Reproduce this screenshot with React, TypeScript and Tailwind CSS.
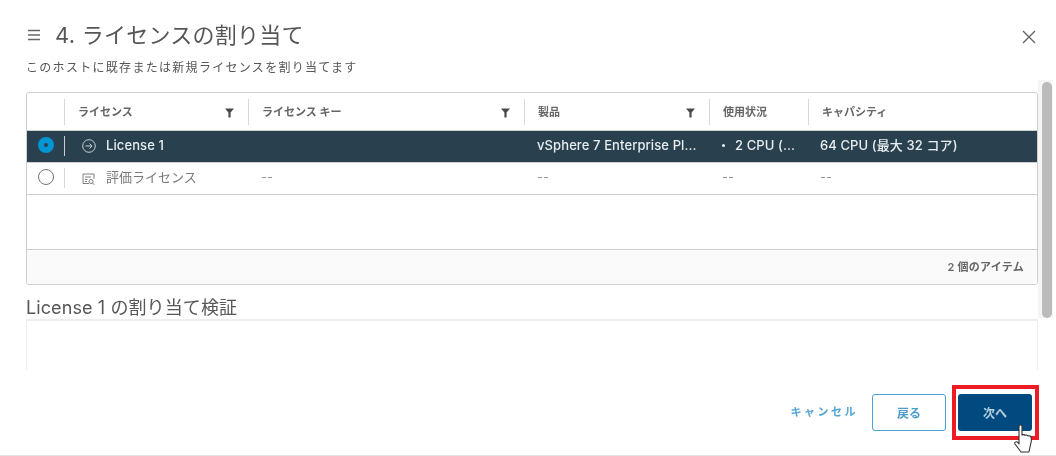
import React from "react";

const FONT = "font-['Inter','Noto_Sans_CJK_JP',sans-serif]";

function Filter() {
  return (
    <svg width="9" height="10" viewBox="0 0 9 10" className="shrink-0 mt-[3px]">
      <path d="M0 0.5h9L5.6 4.4V9.5H3.4V4.4z" fill="#4a4a4a" />
    </svg>
  );
}

function Head({ w, label, filter, cls = "" }: { w: string; label: string; filter?: boolean; cls?: string }) {
  return (
    <div className={`${w} h-full flex items-center ${cls}`}>
      <div className="w-px h-[26px] bg-[#d8d8d8] shrink-0" />
      <span className="ml-[13px] mt-[2px] text-[11px] font-semibold text-[#666] whitespace-nowrap">{label}</span>
      {filter && (
        <span className="ml-auto mr-[14px]">
          <Filter />
        </span>
      )}
    </div>
  );
}

export default function App() {
  return (
    <div className={`relative w-[1056px] h-[456px] bg-white overflow-hidden flex flex-col blur-[0.35px] ${FONT}`}>
      <div className="h-[80px] shrink-0 pl-[26px] pr-[19px] flex flex-col">
        <div className="h-[52px] pt-[18px] flex items-center">
          <svg width="14" height="12" viewBox="0 0 14 12" className="shrink-0 ml-[1px]" fill="none" stroke="#666" strokeWidth="1.5">
            <path d="M1 1.500h12M1 6h12M1 10.500h12" />
          </svg>
          <h1 className="ml-[14px] text-[22px] font-normal text-[#565656] leading-none tracking-[0.25px] whitespace-nowrap">
            4. ライセンスの割り当て
          </h1>
          <svg width="16" height="16" viewBox="0 0 16 16" className="ml-auto mt-[4px]" fill="none" stroke="#666" strokeWidth="1.4">
            <path d="M2 2l12 12M14 2L2 14" />
          </svg>
        </div>
        <p className="mt-[8px] text-[12px] text-[#565656] leading-[16px] tracking-[1.3px] whitespace-nowrap">
          このホストに既存または新規ライセンスを割り当てます
        </p>
      </div>

      <div className="h-[290px] shrink-0 flex overflow-hidden">
        <div className="w-[1038px] shrink-0 pl-[26px] pt-[12px] flex flex-col">
          <div className="h-[193px] shrink-0 border border-[#cfcfcf] rounded-[3px] flex flex-col overflow-hidden">
            <div className="h-[38px] shrink-0 flex items-center border-b border-[#cfcfcf]">
              <div className="w-[37px] shrink-0" />
              <Head w="w-[184px]" label="ライセンス" filter />
              <Head w="w-[276px]" label="ライセンス キー" filter />
              <Head w="w-[185px]" label="製品" filter />
              <Head w="w-[99px]" label="使用状況" />
              <Head w="flex-1" label="キャパシティ" />
            </div>

            <div className="h-[32px] shrink-0 flex items-center bg-[#29414e] text-[13px] font-medium tracking-[0.1px] text-[#e8edf0] border-b border-[#cfcfcf]">
              <div className="w-[37px] shrink-0 flex items-center pl-[11px] -mt-[3px]">
                <span className="w-4 h-4 rounded-full bg-[#0095d3] flex items-center justify-center">
                  <span className="w-[4px] h-[4px] rounded-full bg-[#29414e]" />
                </span>
              </div>
              <div className="w-[184px] h-full flex items-center">
                <div className="w-px h-[20px] bg-[#c8d0d4] -mt-[2px]" />
                <svg width="14" height="14" viewBox="0 0 14 14" className="ml-[17px] -mt-[1px]" fill="none" stroke="#c5ced3" strokeWidth="1">
                  <circle cx="7" cy="7" r="6.3" />
                  <path d="M3.500 7h6.500M7.500 4.500L10 7l-2.500 2.500" />
                </svg>
                <span className="ml-[10px] -mt-[2px]">License 1</span>
              </div>
              <div className="w-[276px]" />
              <div className="w-[185px] pl-[13px] -mt-[2px] whitespace-nowrap">vSphere 7 Enterprise Pl...</div>
              <div className="w-[99px] pl-[13px] -mt-[2px] flex items-center whitespace-nowrap">
                <span className="w-[3px] h-[3px] bg-[#e8edf0] rounded-full mr-[10px]" />2 CPU (...
              </div>
              <div className="flex-1 pl-[12px] -mt-[2px] whitespace-nowrap">64 CPU (最大 32 コア)</div>
            </div>

            <div className="h-[32px] shrink-0 flex items-center text-[13px] text-[#7a7a7a] border-b border-[#cfcfcf]">
              <div className="w-[37px] shrink-0 flex items-center pl-[11px] -mt-[3px]">
                <span className="w-4 h-4 rounded-full border border-[#737373] bg-white" />
              </div>
              <div className="w-[184px] h-full flex items-center">
                <div className="w-px h-[20px] bg-[#d8d8d8] -mt-[2px]" />
                <svg width="14" height="14" viewBox="0 0 14 14" className="ml-[17px]" fill="none" stroke="#808080" strokeWidth="1">
                  <path d="M7 11.500H1V2h11v5" />
                  <path d="M3 5h6M3 7.500h2.500M3 9.500h2" />
                  <circle cx="9" cy="9.500" r="2" />
                  <path d="M10.500 11l1.800 1.800" />
                </svg>
                <span className="ml-[10px] -mt-[2px]">評価ライセンス</span>
              </div>
              <div className="w-[276px] pl-[13px] -mt-[2px] text-[#9a9a9a]">--</div>
              <div className="w-[185px] pl-[13px] -mt-[2px] text-[#9a9a9a]">--</div>
              <div className="w-[99px] pl-[13px] -mt-[2px] text-[#9a9a9a]">--</div>
              <div className="flex-1 pl-[12px] -mt-[2px] text-[#9a9a9a]">--</div>
            </div>

            <div className="flex-1" />

            <div className="h-[35px] shrink-0 bg-[#fafafa] border-t border-[#cfcfcf] flex items-center justify-end pr-[13px] text-[11px] font-semibold tracking-[0.25px] text-[#666]">
              2 個のアイテム
            </div>
          </div>

          <h2 className="mt-[12px] text-[18px] font-normal leading-[22px] tracking-[0.1px] text-[#565656] whitespace-nowrap">
            License 1 の割り当て検証
          </h2>
          <div className="flex-1 border-t-2 border-l border-r border-[#eeeeee]" />
        </div>

        <div className="w-[15px] shrink-0 h-[238px] bg-[#f5f5f5] pl-[4px] pr-[1px] pt-[2px]">
          <div className="h-full rounded-[5px] bg-[#bbbbbb]" />
        </div>
      </div>

      <div className="flex-1 flex items-center justify-end pr-[24px] border-b border-[#e3e3e3]">
        <span className="text-[11px] font-semibold text-[#53a6d4] tracking-[2.500px] whitespace-nowrap">キャンセル</span>
        <button className="ml-[14px] w-[74px] h-[37px] rounded-[3px] border border-[#49a3d3] bg-white pt-[2px] text-[12px] font-semibold text-[#4d9dc9]">
          戻る
        </button>
        <button className="ml-[12px] w-[74px] h-[37px] rounded-[3px] bg-[#004a80] pt-[2px] text-[12px] font-semibold text-[#b5cede]">
          次へ
        </button>
      </div>

      <div className="absolute left-[952px] top-[385px] w-[87px] h-[55px] border-[4px] border-[#ed1c24]" />
      <svg width="24" height="30" viewBox="0 0 24 30" className="absolute left-[1013px] top-[424px]" fill="#fff" stroke="#333" strokeWidth="1.1" strokeLinejoin="round">
        <path d="M6 2.500c0-2 3-2 3 0V11c1-.6 2.500-.6 3 .4 1-.6 2.400-.4 3 .6 1-.5 2.600-.2 3 1 .5 2 .5 5-.5 7.500L16 28H8L2 20c-1-1.500 1-3 2.500-1.800L6 20z" />
      </svg>
    </div>
  );
}
